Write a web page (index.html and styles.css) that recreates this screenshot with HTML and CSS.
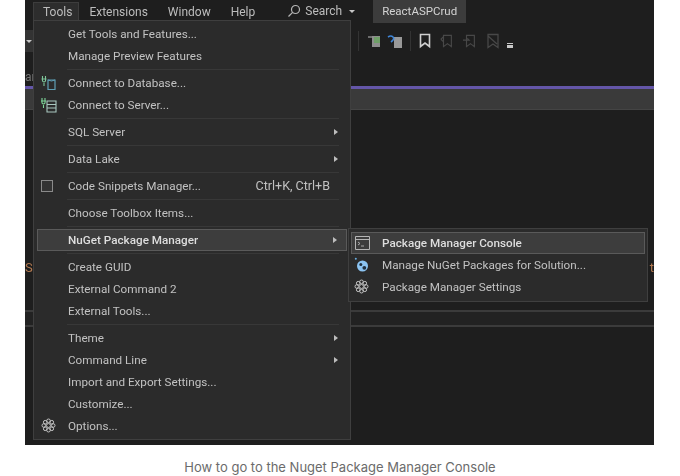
FILE: index.html
```html
<!DOCTYPE html>
<html lang="en">
  <head>
    <meta charset="UTF-8" />
    <title>Nuget Package Manager Console</title>
    <link rel="stylesheet" href="styles.css">
  </head>
  <body>
    <svg class="defs" width="0" height="0">
      <symbol id="gear" viewBox="0 0 15 15">
        <g fill="none" stroke="#c4c4c4" stroke-width="1">
          <circle cx="7.500" cy="7.500" r="2"/>
          <circle cx="7.500" cy="2.800" r="1.800"/>
          <circle cx="7.500" cy="12.200" r="1.800"/>
          <circle cx="2.800" cy="7.500" r="1.800"/>
          <circle cx="12.200" cy="7.500" r="1.800"/>
          <circle cx="4.200" cy="4.200" r="1.800"/>
          <circle cx="10.800" cy="4.200" r="1.800"/>
          <circle cx="4.200" cy="10.800" r="1.800"/>
          <circle cx="10.800" cy="10.800" r="1.800"/>
        </g>
      </symbol>
    </svg>
    <figure class="figure">
      <div class="shot">
        <div class="menubar">
          <span class="top-item top-open">Tools</span>
          <span class="top-item">Extensions</span>
          <span class="top-item">Window</span>
          <span class="top-item">Help</span>
          <span class="top-search">
            <svg width="14" height="14" viewBox="0 0 14 14" fill="none" stroke="#b5b5b5" stroke-width="1.2"><circle cx="8.5" cy="5.5" r="4"/><path d="M5.6 8.4 1.5 12.5"/></svg>
            Search
            <i class="caret-down"></i>
          </span>
          <span class="solution">ReactASPCrud</span>
        </div>
        <div class="toolbar">
          <div class="left-tab"><i class="caret-down"></i></div>
          <span class="tool-sep"></span>
          <svg width="14" height="14" viewBox="0 0 14 14"><rect x="5" y="2" width="8" height="11" fill="#8d8d8d"/><rect x="7" y="3" width="6" height="6" fill="#6f9f68"/><path d="M1 3h4" stroke="#bbb"/></svg>
          <svg width="16" height="15" viewBox="0 0 16 15"><rect x="8" y="3" width="8" height="11" fill="#999"/><path d="M2 3q3-2 5 0t-2 5" fill="none" stroke="#3f86d8" stroke-width="1.6"/></svg>
          <span class="tool-sep"></span>
          <svg width="12" height="16" viewBox="0 0 12 16" fill="none" stroke="#cfcfcf" stroke-width="1.6"><path d="M1.5 1.5h9v12L6 10l-4.500 3.500z"/></svg>
          <svg class="mark" width="14" height="16" viewBox="0 0 16 16" fill="none" stroke="#484848" stroke-width="1.300"><path d="M4 1.500h9v13L8.500 11 4 14.500zM1 6l3-3M1 6l3 3"/></svg>
          <svg class="mark" width="14" height="16" viewBox="0 0 16 16" fill="none" stroke="#484848" stroke-width="1.300"><path d="M4 1.500h9v13L8.500 11 4 14.500zM0 7h7l-2-2"/></svg>
          <svg class="mark" width="14" height="16" viewBox="0 0 14 16" fill="none" stroke="#484848" stroke-width="1.300"><path d="M2 1.500h10v13L7 11l-5 3.500zM2 3l9 8"/></svg>
          <i class="overflow"></i>
        </div>
        <p class="side-text">ar</p>
        <div class="accent"></div>
        <div class="band"></div>
        <div class="editor">
          <span>S</span>
          <span>t</span>
        </div>
        <div class="rule-row"></div>
        <div class="bottom"></div>

        <div class="menu tools-menu">
          <div class="row">Get Tools and Features...</div>
          <div class="row">Manage Preview Features</div>
          <div class="sep"></div>
          <div class="row">
            <svg class="row-icon" width="17" height="16" viewBox="0 0 17 16" fill="none"><path d="M8 5h7v9.500H8z" stroke="#5f9fb5" stroke-width="1.200"/><path d="M8 5q3.500 2 7 0" stroke="#5f9fb5"/><path d="M1.500 4h5M2.500 1v3M5.500 1v3M2.500 4v2q1.500 2 3 0V4M4 8v3" stroke="#7fc79a" stroke-width="1.100"/></svg>
            Connect to Database...
          </div>
          <div class="row">
            <svg class="row-icon" width="17" height="16" viewBox="0 0 17 16" fill="none"><path d="M7 4h9v11H7zM7 7.500h9M7 11h9" stroke="#a9c8c0" stroke-width="1.100"/><path d="M1 4h5M2 1v3M5 1v3M2 4v2q1.500 2 3 0V4M3.500 8v3" stroke="#7fd79a" stroke-width="1.100"/></svg>
            Connect to Server...
          </div>
          <div class="sep"></div>
          <div class="row">SQL Server<i class="arrow"></i></div>
          <div class="sep"></div>
          <div class="row">Data Lake<i class="arrow"></i></div>
          <div class="sep"></div>
          <div class="row">
            <span class="check-box"></span>
            Code Snippets Manager...
            <span class="shortcut">Ctrl+K, Ctrl+B</span>
          </div>
          <div class="sep"></div>
          <div class="row">Choose Toolbox Items...</div>
          <div class="sep"></div>
          <div class="row row-active">NuGet Package Manager<i class="arrow"></i></div>
          <div class="sep"></div>
          <div class="row">Create GUID</div>
          <div class="row">External Command 2</div>
          <div class="row">External Tools...</div>
          <div class="sep"></div>
          <div class="row">Theme<i class="arrow"></i></div>
          <div class="row">Command Line<i class="arrow"></i></div>
          <div class="row">Import and Export Settings...</div>
          <div class="row">Customize...</div>
          <div class="row">
            <svg class="row-icon gear-icon" width="15" height="15"><use href="#gear"/></svg>
            Options...
          </div>
        </div>

        <div class="menu nuget-menu">
          <div class="row row-active">
            <svg class="row-icon" width="15" height="14" viewBox="0 0 15 14" fill="none" stroke="#b5b5b5"><path d="M.5.500h14v13H.5zM.5 3.500h14"/><path d="M3 6l2 1.500L3 9M6 10h3" stroke-width=".9"/></svg>
            Package Manager Console
          </div>
          <div class="row">
            <svg class="row-icon" width="15" height="15" viewBox="0 0 15 15"><circle cx="8.500" cy="9" r="5.500" fill="#8cc4f2"/><circle cx="6.800" cy="7.500" r="1.500" fill="#20303f"/><circle cx="10.300" cy="10.800" r="1.900" fill="#20303f"/><circle cx="1.800" cy="1.800" r="1" fill="#6aaee0"/></svg>
            Manage NuGet Packages for Solution...
          </div>
          <div class="row">
            <svg class="row-icon" width="15" height="15"><use href="#gear"/></svg>
            Package Manager Settings
          </div>
        </div>
      </div>
      <figcaption class="caption">How to go to the Nuget Package Manager Console</figcaption>
    </figure>
  </body>
</html>
```

FILE: styles.css
```css
body {
  margin: 0;
  background-color: #fff;
  font-family: "Roboto", sans-serif;
  overflow: hidden;
}
.defs {
  display: block;
  height: 0;
}
.figure {
  margin: 0;
  width: 680px;
  height: 476px;
}
.shot {
  position: relative;
  width: 629px;
  height: 445px;
  margin-left: 25px;
  background-color: #1e1e1e;
  filter: blur(0.5px);
  overflow: hidden;
}
.caption {
  margin-top: 13px;
  text-align: center;
  font-family: "Inter", sans-serif;
  font-size: 13px;
  line-height: 18px;
  color: #6b6b6b;
}

/* top of the window */
.menubar {
  display: flex;
  align-items: center;
  height: 23px;
  padding-left: 8px;
  font-size: 12px;
  color: #bdbdbd;
}
.top-item {
  box-sizing: border-box;
  height: 20px;
  padding: 2px 10px 0;
  line-height: 17px;
}
.top-open {
  border: 1px solid #3d3d3d;
  border-bottom: 0;
  background-color: #2d2d2d;
  padding: 1px 6px 0 9px;
}
.top-search {
  display: flex;
  align-items: center;
  gap: 4px;
  margin: -1px 0 0 22px;
}
.caret-down {
  display: block;
  width: 0;
  height: 0;
  margin-left: 3px;
  border: 3px solid transparent;
  border-top: 3px solid #c8c8c8;
  border-bottom: 0;
}
.solution {
  margin-left: 18px;
  padding: 0 9px;
  height: 23px;
  font-size: 11.500px;
  line-height: 22px;
  background-color: #3c3c3c;
  color: #d4d4d4;
}
.toolbar {
  display: flex;
  align-items: center;
  gap: 5px;
  height: 36px;
  padding-left: 330px;
  position: relative;
}
.left-tab {
  position: absolute;
  left: 0;
  top: 7px;
  width: 8px;
  height: 22px;
  background-color: #333;
  padding-top: 10px;
  box-sizing: border-box;
}
.left-tab .caret-down {
  margin-left: 1px;
}
.tool-sep {
  width: 1px;
  height: 20px;
  background-color: #333;
  margin: 0 3px;
}
.mark {
  margin-left: 4px;
}
.overflow {
  display: block;
  width: 6px;
  height: 5px;
  margin: 8px 0 0 2px;
  border-top: 1px solid #c8c8c8;
  border-bottom: 3px solid #c8c8c8;
  box-sizing: border-box;
}
.side-text {
  margin: 0;
  height: 27px;
  font-size: 12px;
  line-height: 36px;
  color: #777;
}
.accent {
  height: 3px;
  background-color: #6456a8;
}
.band {
  height: 21px;
  background-color: #3a3a3a;
  border-bottom: 1px solid #444;
  box-sizing: border-box;
}
.editor {
  display: flex;
  justify-content: space-between;
  height: 200px;
  padding-top: 149px;
  box-sizing: border-box;
  font-size: 13px;
  line-height: 18px;
  color: #b07850;
}
.rule-row {
  height: 17px;
  box-sizing: border-box;
  border-top: 2px solid #3b3b3b;
  border-bottom: 2px solid #3b3b3b;
  background-color: #222;
}
.bottom {
  height: 118px;
}

/* menus */
.menu {
  position: absolute;
  box-sizing: border-box;
  background-color: #2b2b2b;
  border: 1px solid #3f3f3f;
  font-size: 11.700px;
  color: #c2c2c2;
}
.tools-menu {
  left: 8px;
  top: 20px;
  width: 318px;
  height: 420px;
  padding: 2px 3px;
}
.nuget-menu {
  left: 323px;
  top: 228px;
  width: 300px;
  height: 74px;
  padding: 3px 2px;
}
.row {
  position: relative;
  display: flex;
  align-items: center;
  height: 22px;
  padding-left: 31px;
  box-sizing: border-box;
  line-height: 20px;
}
.row-active {
  border: 1px solid #5a5a5a;
  background-color: #3d3d3d;
  color: #dedede;
  font-weight: 500;
  padding-left: 30px;
}
.sep {
  height: 1px;
  margin: 2px 8px 2px 30px;
  background-color: #383838;
}
.row-icon {
  position: absolute;
  left: 3px;
  top: 3px;
}
.gear-icon {
  left: 4px;
}
.check-box {
  position: absolute;
  left: 4px;
  top: 5px;
  width: 10px;
  height: 10px;
  border: 1px solid #8a8a8a;
  background-color: #333;
}
.shortcut {
  margin-left: auto;
  margin-right: 17px;
  font-size: 12.500px;
}
.arrow {
  margin: 0 9px 0 auto;
  width: 0;
  height: 0;
  border: 3px solid transparent;
  border-left: 4px solid #bdbdbd;
  border-right: 0;
}
```
